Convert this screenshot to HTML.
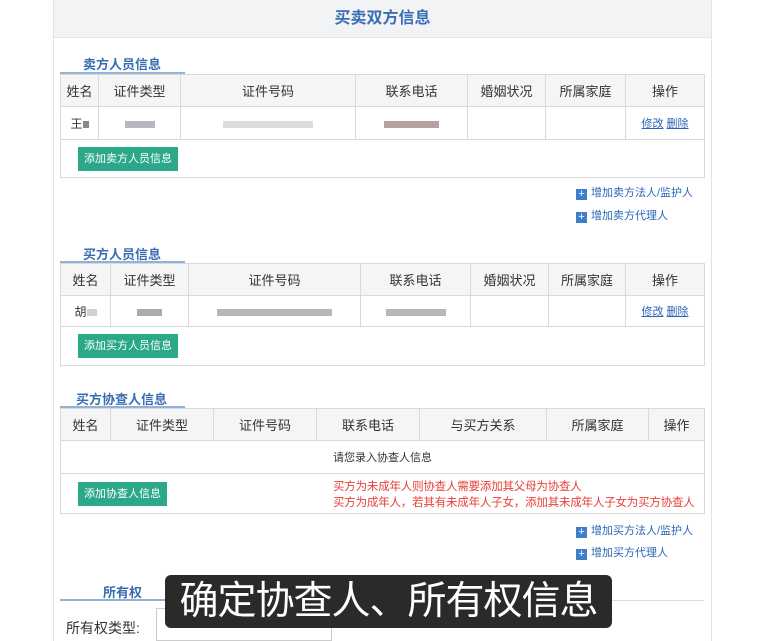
<!DOCTYPE html>
<html><head><meta charset="utf-8"><style>
*{margin:0;padding:0;box-sizing:border-box}
body{width:783px;height:641px;background:#fff;position:relative;overflow:hidden;font-family:"Liberation Sans","Noto Sans CJK SC",sans-serif;font-size:13px;color:#333}
.a{position:absolute}
.panel{left:53px;top:0;width:659px;height:641px;border-left:1px solid #e3e3e3;border-right:1px solid #e3e3e3}
.hdr{left:54px;top:0;width:657px;height:38px;background:#f2f3f5;border-bottom:1px solid #e6e6e6;text-align:center;line-height:38px;font-size:16px;font-weight:bold;color:#3b6eb5}
.h{color:#3a6db0;font-size:13px;font-weight:bold}
.ul{height:2px;background:#8fb3d9}
table{position:absolute;border-collapse:collapse;left:60px;width:644px;table-layout:fixed}
td{border:1px solid #d9d9d9;text-align:center;font-size:13px;color:#333}
tr.th td{background:#f5f5f5;height:32px}
.btn{display:inline-block;background:#2aa889;color:#fff;font-size:11px;padding:0 6px;height:24px;line-height:24px}
.lk{color:#2a66b8;font-size:11px}
.lk u{color:#2a66b8}
.plus{display:inline-block;width:11px;height:11px;background:#3d7fcc;color:#fff;font-size:11px;line-height:11px;text-align:center;margin-right:4px;vertical-align:-1px}
.blur{display:inline-block;height:7px;background:#bbb;opacity:.7}
</style></head><body>
<div class="a panel"></div>
<div class="a hdr">买卖双方信息</div>

<div class="a h" style="left:83px;top:54px">卖方人员信息</div>
<div class="a ul" style="left:60px;top:72px;width:125px"></div>
<table style="top:74px">
<colgroup><col style="width:38px"><col style="width:82px"><col style="width:175px"><col style="width:112px"><col style="width:78px"><col style="width:80px"><col style="width:79px"></colgroup>
<tr class="th"><td>姓名</td><td>证件类型</td><td>证件号码</td><td>联系电话</td><td>婚姻状况</td><td>所属家庭</td><td>操作</td></tr>
<tr style="height:33px"><td style="font-size:12px">王<span class="blur" style="width:6px;background:#555"></span></td><td><span class="blur" style="width:30px;background:#99a"></span></td><td><span class="blur" style="width:90px;background:#ccc"></span></td><td><span class="blur" style="width:55px;background:#977"></span></td><td></td><td></td><td class="lk"><u>修改</u> <u>删除</u></td></tr>
<tr style="height:38px"><td colspan="7" style="text-align:left;padding-left:17px"><span class="btn">添加卖方人员信息</span></td></tr>
</table>
<div class="a lk" style="left:576px;top:184px"><span class="plus">+</span>增加卖方法人/监护人</div>
<div class="a lk" style="left:576px;top:207px"><span class="plus">+</span>增加卖方代理人</div>

<div class="a h" style="left:83px;top:244px">买方人员信息</div>
<div class="a ul" style="left:60px;top:261px;width:125px"></div>
<table style="top:263px">
<colgroup><col style="width:50px"><col style="width:78px"><col style="width:172px"><col style="width:110px"><col style="width:78px"><col style="width:77px"><col style="width:79px"></colgroup>
<tr class="th"><td>姓名</td><td>证件类型</td><td>证件号码</td><td>联系电话</td><td>婚姻状况</td><td>所属家庭</td><td>操作</td></tr>
<tr style="height:31px"><td style="font-size:12px">胡<span class="blur" style="width:10px"></span></td><td><span class="blur" style="width:25px;background:#888"></span></td><td><span class="blur" style="width:115px;background:#999"></span></td><td><span class="blur" style="width:60px;background:#999"></span></td><td></td><td></td><td class="lk"><u>修改</u> <u>删除</u></td></tr>
<tr style="height:39px"><td colspan="7" style="text-align:left;padding-left:17px"><span class="btn">添加买方人员信息</span></td></tr>
</table>

<div class="a h" style="left:76px;top:389px">买方协查人信息</div>
<div class="a ul" style="left:60px;top:406px;width:125px"></div>
<table style="top:408px">
<colgroup><col style="width:50px"><col style="width:103px"><col style="width:103px"><col style="width:103px"><col style="width:127px"><col style="width:102px"><col style="width:56px"></colgroup>
<tr class="th"><td>姓名</td><td>证件类型</td><td>证件号码</td><td>联系电话</td><td>与买方关系</td><td>所属家庭</td><td>操作</td></tr>
<tr style="height:33px"><td colspan="7" style="font-size:11px">请您录入协查人信息</td></tr>
<tr style="height:40px"><td colspan="7" style="text-align:left;padding-left:17px;position:relative"><span class="btn">添加协查人信息</span>
<div class="a" style="left:272px;top:5px;color:#e8403a;font-size:11.5px;line-height:16px;white-space:nowrap;letter-spacing:-0.2px">买方为未成年人则协查人需要添加其父母为协查人<br>买方为成年人，若其有未成年人子女，添加其未成年人子女为买方协查人</div></td></tr>
</table>
<div class="a lk" style="left:576px;top:522px"><span class="plus">+</span>增加买方法人/监护人</div>
<div class="a lk" style="left:576px;top:544px"><span class="plus">+</span>增加买方代理人</div>

<div class="a h" style="left:103px;top:582px">所有权</div>
<div class="a" style="left:60px;top:600px;width:644px;height:1px;background:#ddd"></div>
<div class="a ul" style="left:60px;top:599px;width:110px"></div>
<div class="a" style="left:66px;top:618px;font-size:14px">所有权类型:</div>
<div class="a" style="left:156px;top:608px;width:176px;height:33px;border:1px solid #ccc"></div>

<div class="a" style="left:165px;top:575px;width:447px;height:53px;background:#2a2a2a;border-radius:6px;color:#fff;font-size:39px;line-height:53px;text-align:center;white-space:nowrap;letter-spacing:-1px">确定协查人、所有权信息</div>
</body></html>
